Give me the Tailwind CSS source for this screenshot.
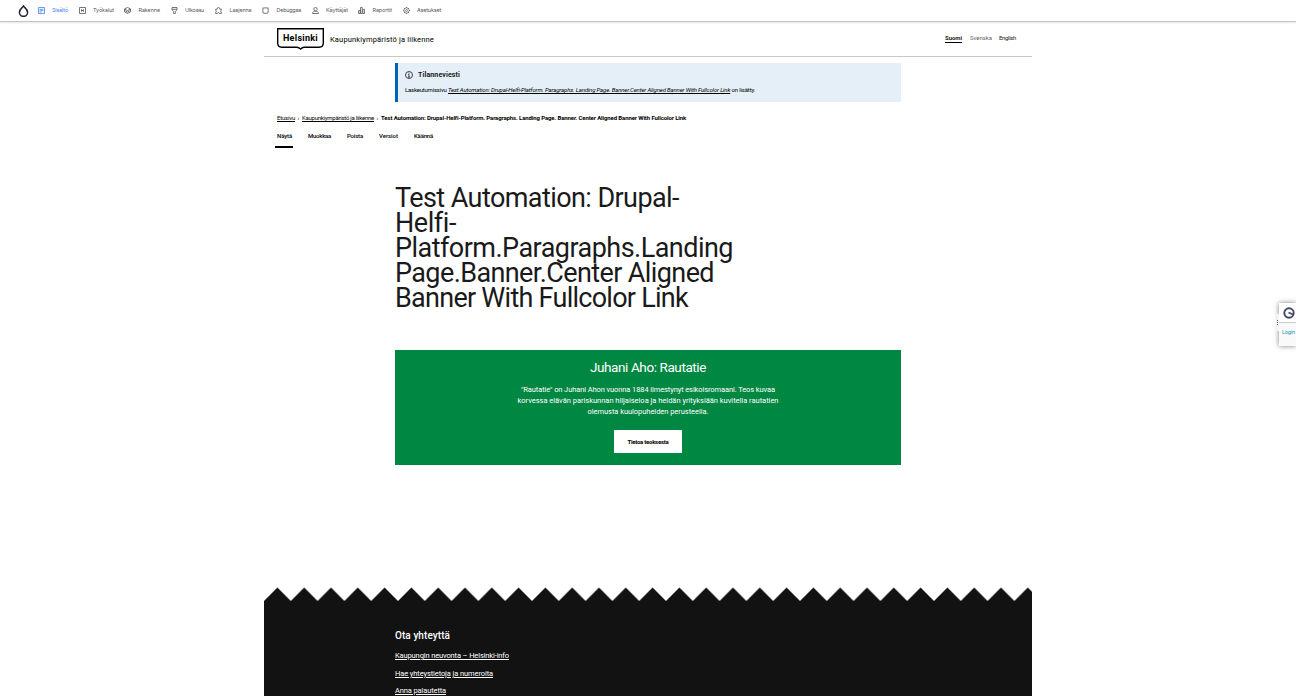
<!DOCTYPE html>
<html lang="fi">
<head>
<meta charset="utf-8">
<title>Kaupunkiympäristö ja liikenne</title>
<script src="https://cdn.jsdelivr.net/npm/@tailwindcss/browser@4"></script>
</head>
<body class="h-[696px] overflow-hidden bg-white font-['Roboto',sans-serif] text-[#1a1a1a]">
<nav class="relative flex h-[22px] items-center border-b border-[#c4c4c4] pl-[18px] text-[5.4px] font-['Inter',sans-serif] text-[#55565b] shadow-[0_1px_2px_rgba(0,0,0,0.1)]">
  <svg class="mr-[9px] h-[12px] w-[11px]" viewBox="0 0 11 12" fill="none" stroke="#222330" stroke-width="1.5"><path d="M5.5 1C4.800 2.500 1.400 4.200 1.400 7.200a4.100 4.100 0 0 0 8.200 0C9.600 4.200 6.200 2.500 5.500 1Z"/></svg>
  <a class="flex w-[41px] items-center gap-[7px] text-[#3f83f0]"><svg class="size-[7px]" viewBox="0 0 7 7" fill="none" stroke="currentColor" stroke-width=".8"><path d="M.5.5h6v6h-6zM1.500 2.300h4M1.500 3.700h4M1.500 5h2"/></svg><span class="tracking-[-0.138px]">Sisältö</span></a>
  <a class="flex w-[45px] items-center gap-[7px]"><svg class="size-[7px]" viewBox="0 0 7 7" fill="none" stroke="currentColor" stroke-width=".8"><path d="M.5.5h6v6h-6zM2.500 2.300v2.400M4.500 2.300v2.400M2.500 3.500h2"/></svg><span class="tracking-[-0.068px]">Työkalut</span></a>
  <a class="flex w-[47px] items-center gap-[7.500px]"><svg class="size-[7px]" viewBox="0 0 7 7" fill="none" stroke="currentColor" stroke-width=".8"><path d="M3.500.4 6.600 2 3.500 3.600.4 2ZM.4 2v2.800l3.100 1.700 3.100-1.700V2M.4 3.400l3.100 1.700 3.100-1.700"/></svg><span class="tracking-[-0.067px]">Rakenne</span></a>
  <a class="flex w-[44px] items-center gap-[7px]"><svg class="size-[7px]" viewBox="0 0 7 7" fill="none" stroke="currentColor" stroke-width=".8"><path d="M1 .5h5v2.200L4.300 4.500v2H2.700v-2L1 2.700ZM1 2.300h5"/></svg><span class="tracking-[-0.2px]">Ulkoasu</span></a>
  <a class="flex w-[47px] items-center gap-[7.500px]"><svg class="size-[7px]" viewBox="0 0 7 7" fill="none" stroke="currentColor" stroke-width=".8"><path d="M.7 6.500V5c1-.1 1-1.400 0-1.500V2.200h1.500c-.5-2.400 3.100-2.400 2.600 0h1.500v1.300c-1 .1-1 1.400 0 1.500v1.500H4.500c0-1.200-2-1.200-2 0Z"/></svg><span class="tracking-[-0.119px]">Laajenna</span></a>
  <a class="flex w-[50px] items-center gap-[7.500px]"><svg class="size-[7px]" viewBox="0 0 7 7" fill="none" stroke="currentColor" stroke-width=".8"><rect x=".9" y=".9" width="5.200" height="5.400" rx="1"/><path d="M0 1h1M6 1h1" stroke-width=".5"/></svg><span class="tracking-[-0.2px]">Debuggaa</span></a>
  <a class="flex w-[46px] items-center gap-[7px]"><svg class="size-[7px]" viewBox="0 0 7 7" fill="none" stroke="currentColor" stroke-width=".8"><circle cx="3.500" cy="2.200" r="1.700"/><path d="M.5 6.500c0-1.800 1.500-2.300 3-2.300s3 .5 3 2.300Z"/></svg><span class="tracking-[-0.026px]">Käyttäjät</span></a>
  <a class="flex w-[45px] items-center gap-[7.500px]"><svg class="size-[7px]" viewBox="0 0 7 7" fill="none" stroke="currentColor" stroke-width=".8"><path d="M.5 3.600h1.700v2.900H.5ZM2.500.5h1.700v6H2.500ZM4.800 2.300h1.700v4.200H4.800Z"/></svg><span class="tracking-[-0.057px]">Raportit</span></a>
  <a class="flex items-center gap-[7px]"><svg class="size-[7px]" viewBox="0 0 7 7" fill="none" stroke="currentColor" stroke-width=".7"><circle cx="3.500" cy="3.500" r="2.700"/><circle cx="3.500" cy="3.500" r="1"/><path d="M3.500 0v1M3.500 6v1M0 3.500h1M6 3.500h1M1 1l.8.8M5.200 5.200l.8.800M1 6l.8-.8M5.200 1.800 6 1"/></svg><span class="tracking-[-0.153px]">Asetukset</span></a>
</nav>
<div class="mx-auto w-[768px]">
  <header class="flex h-[35px] items-start border-b border-[#c8c8c8] pl-[13px] pr-[16px]">
    <div class="relative mt-[6px] flex h-[22px] w-[47px]">
      <svg class="absolute inset-0" width="47" height="22" viewBox="0 0 47 22" fill="none" stroke="#000" stroke-width="1.400"><path d="M.7.700h45.600V15c0 2.600-1.600 4.200-4.200 4.200H27c-1.500 0-2.500.8-3.500 1.800-1-1-2-1.800-3.500-1.800H4.900C2.300 19.200.7 17.600.7 15Z"/></svg>
      <b class="relative ml-[6px] mt-[4px] text-[9px] leading-[12px] tracking-[0.27px] text-black">Helsinki</b>
    </div>
    <span class="ml-[6px] mt-[12px] text-[7.500px] leading-[12px] tracking-[0.159px] text-black">Kaupunkiympäristö ja liikenne</span>
    <div class="ml-auto mt-[12px] flex text-[6px] leading-[8px]">
      <b class="mr-[8px] border-b border-black tracking-[-0.047px]">Suomi</b>
      <span class="mr-[7px] tracking-[-0.047px] text-[#666]">Svenska</span>
      <span class="tracking-[-0.346px]">English</span>
    </div>
  </header>
  <section class="ml-[131px] mt-[6px] h-[39px] w-[506px] border-l-[3px] border-[#0062b9] bg-[#e5eff8] pl-[7px] pt-[7px]">
    <div class="flex h-[9px] items-center gap-[5px]">
      <svg class="size-[8px]" viewBox="0 0 8 8" fill="none" stroke="#1a1a1a" stroke-width=".8"><circle cx="4" cy="4" r="3.500"/><path d="M4 1.600v1M3.200 3.500H4v2.600M3 6.100h2"/></svg>
      <b class="mt-px text-[7px] leading-[9px] tracking-[0.125px]">Tilanneviesti</b>
    </div>
    <p class="mt-[7px] whitespace-nowrap text-[6px] leading-[8px] text-black"><span class="tracking-[-0.214px]">Laskeutumissivu&nbsp;</span><em class="tracking-[-0.163px] underline underline-offset-1">Test Automation: Drupal-Helfi-Platform. Paragraphs. Landing Page. Banner.Center Aligned Banner With Fullcolor Link</em><span class="tracking-[-0.169px]">&nbsp;on lisätty.</span></p>
  </section>
  <div class="ml-[13px] mt-[12px] flex h-[8px] text-[6px] leading-[8px] text-black">
    <u class="tracking-[-0.208px] underline-offset-1">Etusivu</u><span class="w-[7px] text-center">›</span><u class="tracking-[-0.259px] underline-offset-1">Kaupunkiympäristö ja liikenne</u><span class="w-[7px] text-center">›</span><b class="whitespace-nowrap tracking-[-0.116px]">Test Automation: Drupal-Helfi-Platform. Paragraphs. Landing Page. Banner. Center Aligned Banner With Fullcolor Link</b>
  </div>
  <div class="ml-[11px] mt-[10px] flex h-[16px] text-[6px] font-medium leading-[8px] text-black">
    <div class="mr-[15px] h-[16px] w-[18px] border-b-2 border-black pl-[2px] tracking-[-0.125px]">Näytä</div>
    <span class="w-[39px] tracking-[-0.246px]">Muokkaa</span><span class="w-[32px] tracking-[-0.174px]">Poista</span><span class="w-[35px] tracking-[-0.016px]">Versiot</span><span class="tracking-[-0.198px]">Käännä</span>
  </div>
  <h1 class="ml-[131px] mt-[38px] whitespace-nowrap text-[27px] leading-[25px] text-[#1a1a1a]"><span class="tracking-[-0.577px]">Test Automation: Drupal-</span><br><span class="tracking-[-0.430px]">Helfi-</span><br><span class="tracking-[-0.530px]">Platform.Paragraphs.Landing</span><br><span class="tracking-[-0.602px]">Page.Banner.Center Aligned</span><br><span class="tracking-[-0.735px]">Banner With Fullcolor Link</span></h1>
  <section class="ml-[131px] mt-[39px] flex h-[115px] w-[506px] flex-col items-center bg-[#008741] pt-[9px] text-white">
    <h2 class="text-[13.500px] leading-[16px] tracking-[-0.402px]">Juhani Aho: Rautatie</h2>
    <p class="mt-[9px] whitespace-nowrap text-center text-[7.500px] leading-[11px]"><span class="tracking-[-0.101px]">"Rautatie" on Juhani Ahon vuonna 1884 ilmestynyt esikoisromaani. Teos kuvaa</span><br><span class="tracking-[-0.014px]">korvessa elävän pariskunnan hiljaiseloa ja heidän yrityksiään kuvitella rautatien</span><br><span class="tracking-[-0.045px]">olemusta kuulopuheiden perusteella.</span></p>
    <a class="mt-[13px] flex h-[23px] w-[68px] items-center justify-center bg-white pb-px text-[6px] font-bold tracking-[-0.257px] text-black">Tietoa teoksesta</a>
  </section>
  <footer class="mt-[122px]">
    <svg class="block" width="768" height="14" viewBox="0 0 768 14"><defs><pattern id="zigzag" width="26.800" height="14" patternUnits="userSpaceOnUse"><path d="M0 14 13.400.5 26.800 14Z" fill="#121212"/></pattern></defs><rect width="768" height="14" fill="url(#zigzag)"/></svg>
    <div class="flex h-[100px] flex-col items-start bg-[#121212] pl-[131px] pt-[29px] text-[7.500px] leading-[9px] text-white">
      <h3 class="text-[10px] font-medium leading-[12px] tracking-[0.073px]">Ota yhteyttä</h3>
      <u class="mt-[9px] tracking-[-0.130px] underline-offset-1">Kaupungin neuvonta – Helsinki-info</u>
      <u class="mt-[9px] tracking-[-0.103px] underline-offset-1">Hae yhteystietoja ja numeroita</u>
      <u class="mt-[8px] tracking-[-0.125px] underline-offset-1">Anna palautetta</u>
    </div>
  </footer>
</div>
<aside class="absolute right-0 top-[303px] flex h-[43px] w-[17px] flex-col bg-[#f9f9f9] shadow-[0_0_5px_rgba(0,0,0,0.5)]">
  <div class="flex h-[20px] items-center justify-center border-b border-[#ccc] bg-white"><svg class="ml-[2px] size-[12px]" viewBox="0 0 12 12" fill="none" stroke="#414a63" stroke-width="1.900"><circle cx="6" cy="6" r="4.700"/><path d="M5.500 5.500 10 7.500"/></svg></div>
  <span class="ml-[3px] mt-[6px] text-[5.500px] leading-[7px] tracking-[-0.113px] text-[#1f98a5]">Login</span>
  <div class="absolute -left-[3px] top-[11px] flex h-[17px] w-[3px] flex-col items-center justify-center gap-px bg-[#f3f3f3]"><i class="size-px bg-[#555]"></i><i class="size-px bg-[#555]"></i><i class="size-px bg-[#555]"></i></div>
</aside>
</body>
</html>
